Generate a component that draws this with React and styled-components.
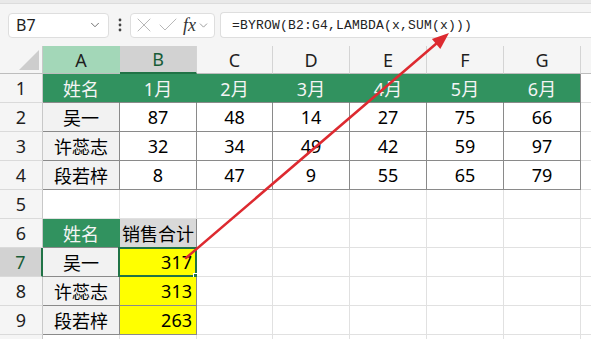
import React from 'react'
import styled, { createGlobalStyle } from 'styled-components'
import { ChevronDown, X, Check } from 'lucide-react'

const GlobalStyle = createGlobalStyle`
  html, body {
    margin: 0;
    padding: 0;
    background: #ffffff;
    overflow: hidden;
  }
  * {
    box-sizing: border-box;
  }
`

const Page = styled.div`
  position: relative;
  width: 591px;
  height: 339px;
  overflow: hidden;
  font-family: "Noto Sans", "Noto Sans CJK SC", sans-serif;
`

const TopStrip = styled.div`
  height: 4px;
  background: #e9e9e9;
  border-bottom: 1px solid #dcdcdc;
`

const FormulaBar = styled.div`
  display: flex;
  align-items: center;
  height: 42px;
  padding-left: 8px;
  background: #f5f5f5;
`

const NameBox = styled.div`
  display: flex;
  align-items: center;
  justify-content: space-between;
  width: 101px;
  height: 25px;
  padding: 0 6px 0 7px;
  background: #ffffff;
  border: 1px solid #dedede;
  border-radius: 4px;
  font-size: 16px;
  color: #1f1f1f;
`

const Dots = styled.div`
  width: 21px;
  display: flex;
  justify-content: center;
`

const FuncBox = styled.div`
  display: flex;
  align-items: center;
  width: 85px;
  height: 25px;
  padding: 0 3px 0 1px;
  gap: 0;
  background: #ffffff;
  border: 1px solid #dedede;
  border-radius: 4px;
`

const Fx = styled.span`
  font-family: "Liberation Serif", serif;
  font-style: italic;
  font-size: 18px;
  color: #333;
  margin: 0 1px 0 3px;
`

const FormulaInput = styled.div`
  flex: 1;
  display: flex;
  align-items: center;
  height: 26px;
  margin-left: 5px;
  padding-left: 11px;
  background: #ffffff;
  border: 1px solid #dedede;
  border-right: none;
  border-radius: 4px 0 0 4px;
  font-family: "Liberation Mono", monospace;
  font-size: 13px;
  letter-spacing: 0.2px;
  color: #222;
`

const Sheet = styled.div`
  display: grid;
  grid-template-columns: 43px 77px 77px 76px 77px 77px 77px 77px 77px;
  grid-template-rows: 28px repeat(10, 29px);
  width: 591px;
`

const Corner = styled.div`
  position: relative;
  background: #f5f5f5;
  border-right: 1px solid #c8c8c8;
  border-bottom: 1px solid #bdbdbd;
`

const ColHead = styled.div`
  display: flex;
  align-items: center;
  justify-content: center;
  font-size: 18px;
  color: ${(p) => (p.$active ? '#185c37' : '#1f1f1f')};
  background: ${(p) =>
    p.$active ? '#d2d2d2' : p.$soft ? '#a3d7b8' : '#f5f5f5'};
  border-right: 1px solid ${(p) => (p.$soft ? '#a3d7b8' : '#d4d4d4')};
  border-bottom: ${(p) =>
    p.$active ? '2px solid #217346' : '1px solid #bdbdbd'};
`

const RowHead = styled.div`
  display: flex;
  align-items: center;
  justify-content: center;
  font-size: 18px;
  color: ${(p) => (p.$active ? '#185c37' : '#1f1f1f')};
  background: ${(p) => (p.$active ? '#d2d2d2' : '#f5f5f5')};
  border-right: ${(p) =>
    p.$active ? '2px solid #217346' : '1px solid #c8c8c8'};
  border-bottom: 1px solid #dadada;
`

const Cell = styled.div`
  position: relative;
  display: flex;
  align-items: center;
  justify-content: ${(p) => (p.$right ? 'flex-end' : 'center')};
  padding: 0 4px;
  font-size: 18px;
  white-space: nowrap;
  background: ${(p) => p.$bg || '#ffffff'};
  color: ${(p) => p.$color || '#000000'};
  border-right: 1px solid ${(p) => p.$side || p.$line || '#e1e1e1'};
  border-bottom: 1px solid ${(p) => p.$line || '#e1e1e1'};
`

const Selection = styled.div`
  position: absolute;
  left: -2px;
  top: -1px;
  right: -1px;
  bottom: -1px;
  border: 2px solid #217346;
  pointer-events: none;
`

const Handle = styled.div`
  position: absolute;
  right: -4px;
  bottom: -4px;
  width: 6px;
  height: 6px;
  background: #217346;
  border: 1px solid #ffffff;
`

const Overlay = styled.svg`
  position: absolute;
  left: 0;
  top: 0;
`

const GREEN = '#31925f'
const DARK = '#8a8a8a'
const GRAY = '#f2f2f2'

const months = ['1月', '2月', '3月', '4月', '5月', '6月']
const data = [
  ['吴一', 87, 48, 14, 27, 75, 66],
  ['许蕊志', 32, 34, 49, 42, 59, 97],
  ['段若梓', 8, 47, 9, 55, 65, 79],
]
const totals = [
  ['吴一', 317],
  ['许蕊志', 313],
  ['段若梓', 263],
]

// H is only a sliver at the right edge, so its letter stays out of view
const cols = ['A', 'B', 'C', 'D', 'E', 'F', 'G', '']

const Blank = ({ count, line }) =>
  Array.from({ length: count }, (_, i) => <Cell key={`b${i}`} $line={line} />)

const App = () => {
  return (
    <Page>
      <GlobalStyle />
      <TopStrip />
      <FormulaBar>
        <NameBox>
          <span>B7</span>
          <ChevronDown size={14} color="#666" strokeWidth={1.6} />
        </NameBox>
        <Dots>
          <svg width="4" height="14" viewBox="0 0 4 14">
            <circle cx="2" cy="2" r="1.4" fill="#444" />
            <circle cx="2" cy="7" r="1.4" fill="#444" />
            <circle cx="2" cy="12" r="1.4" fill="#444" />
          </svg>
        </Dots>
        <FuncBox>
          <X size={24} color="#b8b8b8" strokeWidth={1} />
          <Check size={24} color="#b8b8b8" strokeWidth={1} />
          <Fx>fx</Fx>
          <ChevronDown size={13} color="#888" strokeWidth={1.5} />
        </FuncBox>
        <FormulaInput>=BYROW(B2:G4,LAMBDA(x,SUM(x)))</FormulaInput>
      </FormulaBar>

      <Sheet>
        <Corner>
          <svg
            width="43"
            height="28"
            viewBox="0 0 43 28"
            style={{ position: 'absolute', left: 0, top: 0 }}
          >
            <polygon points="39,4 39,24 19,24" fill="#cdcdcd" />
          </svg>
        </Corner>
        {cols.map((c, i) => (
          <ColHead key={i} $active={c === 'B'} $soft={c === 'A'}>
            {c}
          </ColHead>
        ))}

        <RowHead>1</RowHead>
        <Cell $bg={GREEN} $color="#f4f4f4" $side={GREEN} $line={DARK}>
          姓名
        </Cell>
        {months.map((m, i) => (
          <Cell
            key={m}
            $bg={GREEN}
            $color="#f4f4f4"
            $side={i === 5 ? DARK : GREEN}
            $line={DARK}
          >
            {m}
          </Cell>
        ))}
        <Cell />

        {data.map((row, r) => (
          <React.Fragment key={r}>
            <RowHead>{r + 2}</RowHead>
            {row.map((v, i) => (
              <Cell key={i} $bg={i === 0 ? GRAY : undefined} $line={DARK}>
                {v}
              </Cell>
            ))}
            <Cell />
          </React.Fragment>
        ))}

        <RowHead>5</RowHead>
        <Blank count={8} />

        <RowHead>6</RowHead>
        <Cell $bg={GREEN} $color="#f4f4f4" $side={GREEN} $line={DARK}>
          姓名
        </Cell>
        <Cell $bg="#d9d9d9" $line={DARK} style={{ padding: 0 }}>
          销售合计
        </Cell>
        <Blank count={6} />

        {totals.map(([name, total], r) => (
          <React.Fragment key={name}>
            <RowHead $active={r === 0}>{r + 7}</RowHead>
            <Cell $bg={GRAY} $line={DARK}>
              {name}
            </Cell>
            <Cell $bg="#ffff00" $line={DARK} $right>
              {total}
              {r === 0 && (
                <Selection>
                  <Handle />
                </Selection>
              )}
            </Cell>
            <Blank count={6} />
          </React.Fragment>
        ))}

        <RowHead />
        <Blank count={8} />
      </Sheet>

      <Overlay width="591" height="339" viewBox="0 0 591 339">
        <line
          x1="186"
          y1="258"
          x2="437"
          y2="43"
          stroke="#dd2a30"
          strokeWidth="2.5"
          strokeLinecap="round"
        />
        <polygon points="449,33 440.3,49 431.9,39.1" fill="#dd2a30" />
      </Overlay>
    </Page>
  )
}

export default App
